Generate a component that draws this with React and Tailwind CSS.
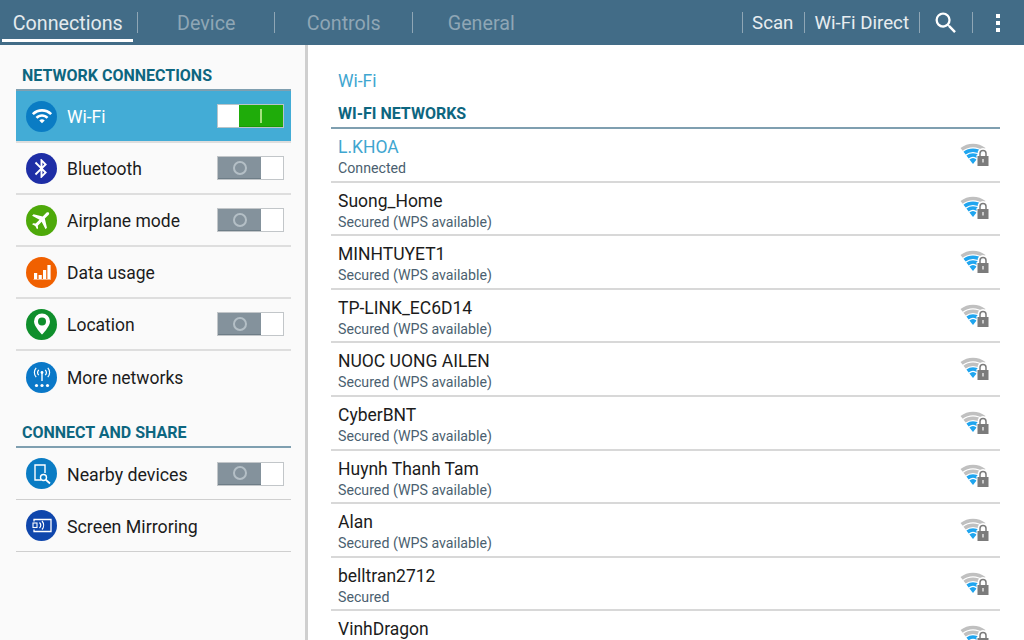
import { MdBluetooth, MdFlight, MdSearch, MdWifi } from "react-icons/md";

const TABS = ["Connections", "Device", "Controls", "General"];

const NETWORKS = [
  { name: "L.KHOA", status: "Connected", level: 3, active: true },
  { name: "Suong_Home", status: "Secured (WPS available)", level: 3 },
  { name: "MINHTUYET1", status: "Secured (WPS available)", level: 3 },
  { name: "TP-LINK_EC6D14", status: "Secured (WPS available)", level: 2 },
  { name: "NUOC UONG AILEN", status: "Secured (WPS available)", level: 2 },
  { name: "CyberBNT", status: "Secured (WPS available)", level: 2 },
  { name: "Huynh Thanh Tam", status: "Secured (WPS available)", level: 2 },
  { name: "Alan", status: "Secured (WPS available)", level: 2 },
  { name: "belltran2712", status: "Secured", level: 2 },
  { name: "VinhDragon", status: "", level: 2 },
];

function arcPath(r) {
  const cx = 13;
  const cy = 21;
  const a = (38 * Math.PI) / 180;
  const dx = (r * Math.sin(a)).toFixed(2);
  const dy = (r * Math.cos(a)).toFixed(2);
  return `M${cx - dx} ${cy - dy}A${r} ${r} 0 0 1 ${cx + Number(dx)} ${cy - dy}`;
}

function SignalIcon({ level }) {
  const blue = "#1fa5ef";
  const grey = "#c0c0c0";
  return (
    <svg width="30" height="24" viewBox="0 0 30 24" className="shrink-0">
      <path d={arcPath(18.5)} fill="none" stroke={grey} strokeWidth="3.6" />
      <path d={arcPath(13.7)} fill="none" stroke={level >= 3 ? blue : grey} strokeWidth="3.6" />
      <path d={arcPath(8.9)} fill="none" stroke={level >= 2 ? blue : grey} strokeWidth="3.6" />
      <path d="M13 21L9.4 16.6A5.6 5.6 0 0 1 16.6 16.6Z" fill={blue} />
      <path d="M19.5 13V10.5A3.5 3.5 0 0 1 26.5 10.5V13" fill="none" stroke="#fff" strokeWidth="4" />
      <rect x="16.5" y="12" width="13" height="11" fill="#fff" />
      <path d="M20 13V10.5A3 3 0 0 1 26 10.5V13" fill="none" stroke="#7b7b7b" strokeWidth="1.5" />
      <rect x="17.5" y="13" width="11" height="10" fill="#7b7b7b" />
      <rect x="22.2" y="16" width="1.6" height="3.5" fill="#dcdcdc" />
    </svg>
  );
}

function Toggle({ on }) {
  if (on) {
    return (
      <div className="flex h-6 w-[67px] shrink-0 border border-[#b9c4c9] bg-white">
        <div className="w-[21px] bg-white" />
        <div className="flex flex-1 items-center justify-center border-b border-[#189a06] bg-[#1fac0a]">
          <div className="h-[14px] w-[2px] bg-[#a5e27f]" />
        </div>
      </div>
    );
  }
  return (
    <div className="flex h-6 w-[67px] shrink-0 border border-[#c2c6c9] bg-white">
      <div className="flex w-[43px] items-center justify-center border-b border-[#6e7d87] bg-[#84929c]">
        <div className="h-[14px] w-[14px] rounded-full border-2 border-[#b4bfc6]" />
      </div>
      <div className="flex-1 bg-white" />
    </div>
  );
}

function DataIcon() {
  return (
    <svg width="20" height="18" viewBox="0 0 20 18">
      <path d="M2 10h3.2v6H2zM6.6 12h3.2v4H6.6zM11 7h3.2v9H11zM15.4 2h3.2v14h-3.2z" fill="#fff" />
      <path d="M1.5 16.5h17.5" stroke="#fff" strokeWidth="1" opacity="0.5" />
    </svg>
  );
}

function PinIcon() {
  return (
    <svg width="20" height="24" viewBox="0 0 20 24">
      <path d="M10 1.5a8 8 0 0 0-8 8c0 5 8 13 8 13s8-8 8-13a8 8 0 0 0-8-8Z" fill="#fff" />
      <circle cx="10" cy="9.5" r="4" fill="#0f8f2c" />
    </svg>
  );
}

function AntennaIcon() {
  return (
    <svg width="24" height="24" viewBox="0 0 24 24" fill="none" stroke="#fff">
      <circle cx="12" cy="7.5" r="1.4" fill="#fff" stroke="none" />
      <path d="M12 8v8" strokeWidth="1.4" />
      <path d="M8.8 4.8a4 4 0 0 0 0 5.4M15.2 4.8a4 4 0 0 1 0 5.4M6.2 2.8a7 7 0 0 0 0 9.4M17.8 2.8a7 7 0 0 1 0 9.4" strokeWidth="1.2" />
      <circle cx="6.5" cy="20.5" r="1.6" fill="#fff" stroke="none" />
      <circle cx="12" cy="20.5" r="1.6" fill="#fff" stroke="none" />
      <circle cx="17.5" cy="20.5" r="1.6" fill="#fff" stroke="none" />
    </svg>
  );
}

function NearbyIcon() {
  return (
    <svg width="22" height="22" viewBox="0 0 22 22" fill="none" stroke="#fff" strokeWidth="1.4">
      <path d="M10 17H4V2h10v8" />
      <circle cx="12.5" cy="14.5" r="3" />
      <path d="M14.8 16.8L19 20.5" strokeWidth="1.8" />
    </svg>
  );
}

function MirrorIcon() {
  return (
    <svg width="20" height="15" viewBox="0 0 20 15" fill="none" stroke="#fff">
      <path d="M2 3.5V1.5h17v12H2V11.5" strokeWidth="1.3" />
      <rect x="1" y="5" width="4" height="4.5" strokeWidth="1.1" />
      <path d="M7.5 4.5a4 4 0 0 1 0 5.5M10 3a6.5 6.5 0 0 1 0 8.5" strokeWidth="1.2" />
    </svg>
  );
}

function SideRow({ icon, color, label, toggle, selected, thin }) {
  return (
    <div
      className={`flex h-[52px] items-center pl-[10px] pr-[7px] ${
        selected ? "bg-[#43acd6] text-white" : "text-[#1c1c1c]"
      } ${thin ? "border-b border-[#cfcfcf]" : "border-b-2 border-[#dedede]"}`}
    >
      <div className={`flex h-[31px] w-[31px] shrink-0 items-center justify-center rounded-full ${color}`}>{icon}</div>
      <span className={`ml-[10px] flex-1 ${thin ? "pt-[3px] text-[17.8px]" : "pt-[2px] text-[17.5px]"}`}>{label}</span>
      {toggle}
    </div>
  );
}

function SectionTitle({ children, className }) {
  return (
    <div className={`border-b-2 border-[#7f9fb0] pb-[2px] pl-[6px] pt-px text-[16px] font-bold leading-[22px] text-[#0d6680] ${className}`}>
      {children}
    </div>
  );
}

export default function App() {
  return (
    <div className="flex h-[640px] w-[1024px] flex-col overflow-hidden bg-white font-['Roboto',sans-serif]">
      <header className="flex h-[45px] shrink-0 items-start bg-[#426c87]">
        {TABS.map((tab, i) => (
          <div
            key={tab}
            className={`relative flex h-[45px] w-[137.5px] items-center justify-center pt-[2px] ${i === 0 ? "pr-[2px]" : ""}`}
          >
            <span className={`text-[19.7px] ${i === 0 ? "text-[#e4eaee]" : "text-[#8fa6b5]"}`}>{tab}</span>
            {i < 3 && <div className="absolute right-0 top-[12px] h-[21px] w-px bg-[#8fa6b5]" />}
            {i === 0 && <div className="absolute bottom-[3px] left-[2px] h-[3px] w-[131px] bg-white" />}
          </div>
        ))}
        <div className="flex h-[45px] flex-1 items-center justify-end text-[18.7px] text-[#e8edf0]">
          <div className="h-[21px] w-px bg-[#8fa6b5]" />
          <span className="ml-[9px] pt-[2px]">Scan</span>
          <div className="ml-[11px] h-[21px] w-px bg-[#8fa6b5]" />
          <span className="ml-[9px] pt-[2px]">Wi-Fi Direct</span>
          <div className="ml-[10px] h-[21px] w-px bg-[#8fa6b5]" />
          <MdSearch className="ml-[12px] text-[28px] text-white" />
          <div className="ml-[12px] h-[21px] w-px bg-[#8fa6b5]" />
          <div className="ml-[23px] mr-6 flex flex-col gap-[3px]">
            <div className="h-1 w-1 bg-white" />
            <div className="h-1 w-1 bg-white" />
            <div className="h-1 w-1 bg-white" />
          </div>
        </div>
      </header>

      <div className="flex min-h-0 flex-1">
        <aside className="w-[308px] shrink-0 border-r-[3px] border-[#cfcfcf] bg-[#fafafa] pl-4 pr-[14px] pt-[19px]">
          <SectionTitle>NETWORK CONNECTIONS</SectionTitle>
          <SideRow
            selected
            color="bg-[#0a7cc4]"
            icon={<MdWifi className="text-[22px] text-white" />}
            label="Wi-Fi"
            toggle={<Toggle on />}
          />
          <SideRow
            color="bg-[#1e2ea6]"
            icon={<MdBluetooth className="text-[23px] text-white" />}
            label="Bluetooth"
            toggle={<Toggle />}
          />
          <SideRow
            color="bg-[#4ea90a]"
            icon={<MdFlight className="rotate-45 text-[24px] text-white" />}
            label="Airplane mode"
            toggle={<Toggle />}
          />
          <SideRow color="bg-[#f06000]" icon={<DataIcon />} label="Data usage" />
          <SideRow color="bg-[#0f8f2c]" icon={<PinIcon />} label="Location" toggle={<Toggle />} />
          <div className="flex h-[52px] items-center pl-[10px] pr-[7px] text-[#1c1c1c]">
            <div className="flex h-[31px] w-[31px] shrink-0 items-center justify-center rounded-full bg-[#0a78c8]">
              <AntennaIcon />
            </div>
            <span className="ml-[10px] flex-1 pt-[2px] text-[17.5px]">More networks</span>
          </div>

          <SectionTitle className="mt-[18px]">CONNECT AND SHARE</SectionTitle>
          <SideRow thin color="bg-[#0a7cc4]" icon={<NearbyIcon />} label="Nearby devices" toggle={<Toggle />} />
          <SideRow thin color="bg-[#0f46ac]" icon={<MirrorIcon />} label="Screen Mirroring" />
        </aside>

        <main className="min-w-0 flex-1 pl-[23px] pr-6">
          <div className="h-[58px] pl-[7px] pt-[24px] text-[17.5px] leading-[24px] text-[#3fa6d0]">Wi-Fi</div>
          <div className="h-[26px] border-b-2 border-[#7f9fb0] pl-[7px] text-[16px] font-bold leading-[22px] text-[#0d6680]">
            WI-FI NETWORKS
          </div>
          {NETWORKS.map((net) => (
            <div key={net.name} className="flex h-[53.6px] items-center border-b-2 border-[#d8d8d8] pl-[7px] pr-[10px]">
              <div className="h-full flex-1 pt-[7px]">
                <div className={`text-[17.5px] leading-[22px] ${net.active ? "text-[#3fa6d0]" : "text-[#1c1c1c]"}`}>
                  {net.name}
                </div>
                <div className="text-[14.2px] leading-[20px] text-[#4b5f70]">{net.status}</div>
              </div>
              <SignalIcon level={net.level} />
            </div>
          ))}
        </main>
      </div>
    </div>
  );
}
